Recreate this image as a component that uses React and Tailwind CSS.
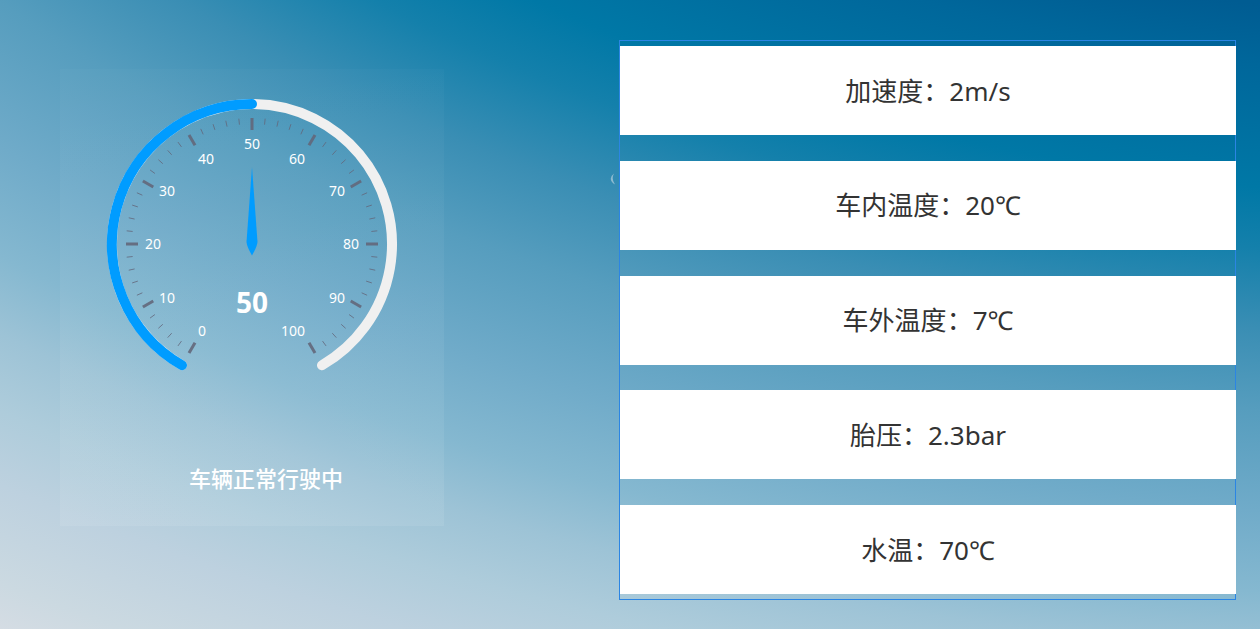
const LABELS = [
  { value: 0, x: 142, y: 262 },
  { value: 10, x: 107, y: 229 },
  { value: 20, x: 93, y: 175 },
  { value: 30, x: 107, y: 122 },
  { value: 40, x: 146, y: 90 },
  { value: 50, x: 192, y: 75 },
  { value: 60, x: 237, y: 90 },
  { value: 70, x: 277, y: 122 },
  { value: 80, x: 291, y: 175 },
  { value: 90, x: 277, y: 229 },
  { value: 100, x: 233, y: 262 },
];

const READINGS = [
  { label: "加速度", value: "2m/s" },
  { label: "车内温度", value: "20℃" },
  { label: "车外温度", value: "7℃" },
  { label: "胎压", value: "2.3bar" },
  { label: "水温", value: "70℃" },
];

const CX = 192;
const CY = 175;

// 0 sits at 240 degrees and 100 at -60 degrees, running clockwise.
function pointAt(value, radius) {
  const angle = ((240 - value * 3) * Math.PI) / 180;
  return [CX + radius * Math.cos(angle), CY - radius * Math.sin(angle)];
}

function arc(from, to, radius) {
  const [x1, y1] = pointAt(from, radius);
  const [x2, y2] = pointAt(to, radius);
  const large = (to - from) * 3 > 180 ? 1 : 0;
  return `M${x1} ${y1}A${radius} ${radius} 0 ${large} 1 ${x2} ${y2}`;
}

function Gauge({ value }) {
  const ticks = Array.from({ length: 51 }, (_, i) => i * 2);
  return (
    <svg
      viewBox="0 0 384 350"
      className="block w-full"
      role="img"
      aria-label={`${value}`}
    >
      <g fill="none" strokeWidth="10" strokeLinecap="round">
        <path d={arc(0, 100, 140)} stroke="#f0f0f0" />
        <path d={arc(0, value, 140)} stroke="#009cff" />
      </g>
      {ticks.map((t) => {
        const major = t % 10 === 0;
        const [x1, y1] = pointAt(t, major ? 114 : 120);
        const [x2, y2] = pointAt(t, 126);
        return (
          <line
            key={t}
            x1={x1}
            y1={y1}
            x2={x2}
            y2={y2}
            stroke="#63677a"
            strokeOpacity={major ? 0.9 : 0.8}
            strokeWidth={major ? 3 : 1}
          />
        );
      })}
      <g
        fill="#ffffff"
        textAnchor="middle"
        className="font-['Noto_Sans',sans-serif]"
      >
        {LABELS.map((l) => (
          <text key={l.value} x={l.x} y={l.y + 5} fontSize="14">
            {l.value}
          </text>
        ))}
        <text x={CX} y={CY + 69} fontSize="28" fontWeight="700">
          {value}
        </text>
      </g>
      <path
        d="M192 98L197.500 173Q197 178 192 186.500Q187 178 186.500 173Z"
        fill="#009cff"
        transform={`rotate(${(value - 50) * 3} ${CX} ${CY})`}
      />
    </svg>
  );
}

export default function App() {
  return (
    <main
      lang="zh-CN"
      className="relative flex min-h-screen gap-[175px] bg-[radial-gradient(265%_318%_at_122%_-127%,#005c92_41%,#00679b_44%,#0078a6_50%,#1480ab_53%,#3a8eb4_57%,#569dbe_61%,#70abc9_66%,#85b8d0_70%,#9dc3d6_73%,#aeccdb_76%,#bdd1df_79%,#cbd9e1_83%,#dadee5_86%)] pt-10 pr-6 pb-[29px] pl-15 font-['Noto_Sans','Noto_Sans_CJK_SC',sans-serif]"
    >
      <svg
        viewBox="0 0 6 12"
        className="absolute top-[173px] left-[610px] h-3 w-1.5"
        aria-hidden="true"
      >
        <path d="M4 0.500Q-3 6 5 11.500Q1 6 4 0.500Z" fill="#8fbbd0" />
      </svg>

      <section className="mt-[29px] w-96 shrink-0 self-start bg-linear-to-b from-white/2 to-white/8 pb-8">
        <Gauge value={50} />
        <p className="mt-[43px] pl-7 text-center text-[22px] leading-8 font-medium text-white">
          车辆正常行驶中
        </p>
      </section>

      <ul className="flex flex-1 flex-col justify-between border border-[#2b85e4] py-[5px]">
        {READINGS.map((r) => (
          <li
            key={r.label}
            className="-mr-px flex h-[89px] items-center justify-center bg-white text-[26px] leading-10 text-[#333333]"
          >
            {r.label}：{r.value}
          </li>
        ))}
      </ul>
    </main>
  );
}
